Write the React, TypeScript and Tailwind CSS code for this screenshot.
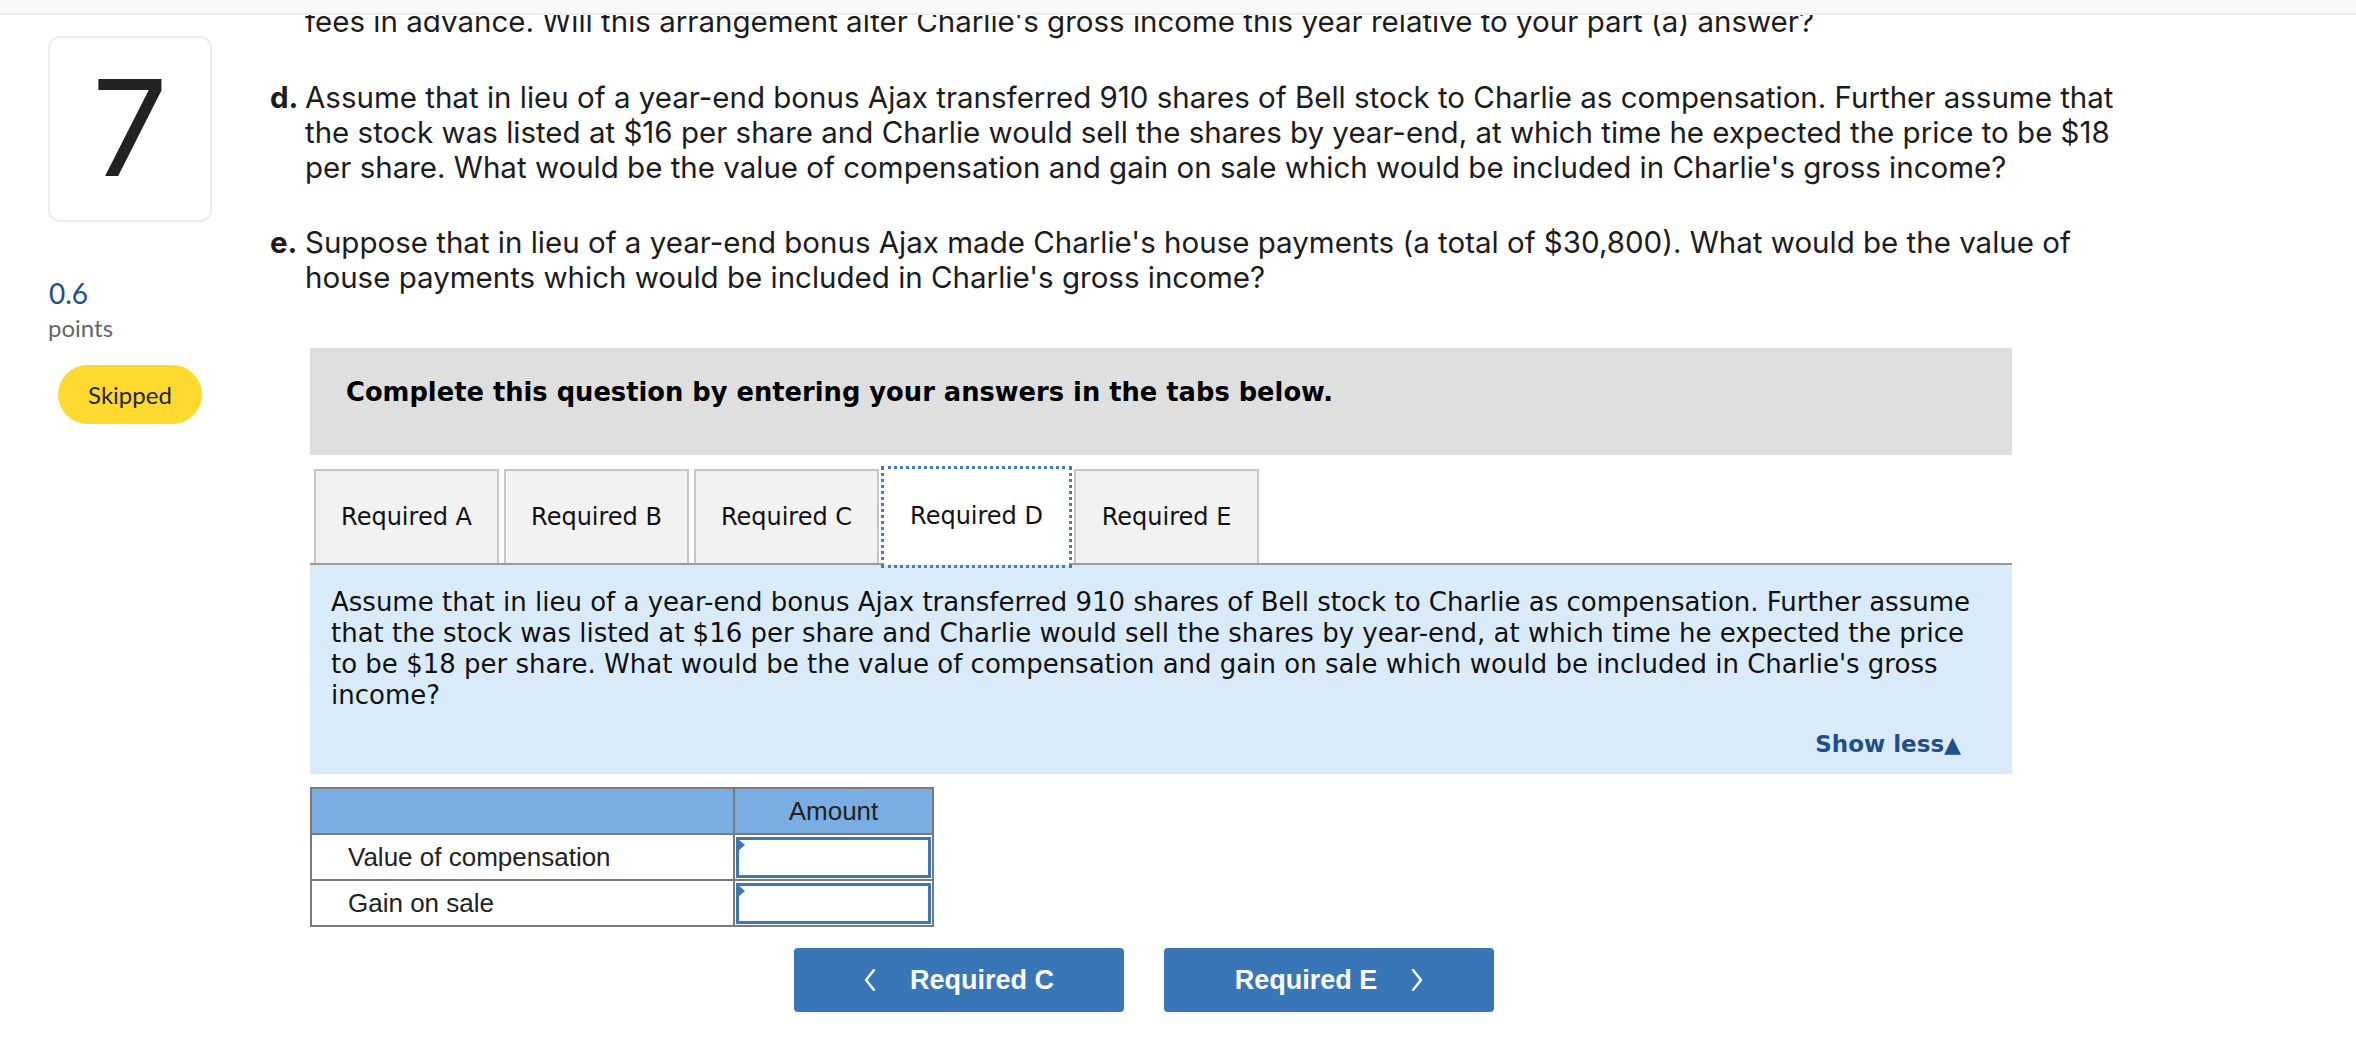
import React from "react";

const lato = "[font-family:Lato,'Noto_Sans',sans-serif]";
const inter = "[font-family:Inter,Lato,sans-serif]";
const verdana = "[font-family:'DejaVu_Sans',Verdana,sans-serif]";
const arial = "[font-family:'Liberation_Sans',Arial,sans-serif]";

const partD = [
  "Assume that in lieu of a year-end bonus Ajax transferred 910 shares of Bell stock to Charlie as compensation. Further assume that",
  "the stock was listed at $16 per share and Charlie would sell the shares by year-end, at which time he expected the price to be $18",
  "per share. What would be the value of compensation and gain on sale which would be included in Charlie's gross income?",
];

const partE = [
  "Suppose that in lieu of a year-end bonus Ajax made Charlie's house payments (a total of $30,800). What would be the value of",
  "house payments which would be included in Charlie's gross income?",
];

const prompt = [
  "Assume that in lieu of a year-end bonus Ajax transferred 910 shares of Bell stock to Charlie as compensation. Further assume",
  "that the stock was listed at $16 per share and Charlie would sell the shares by year-end, at which time he expected the price",
  "to be $18 per share. What would be the value of compensation and gain on sale which would be included in Charlie's gross",
  "income?",
];

const tabs = ["Required A", "Required B", "Required C", "Required D", "Required E"];

function Part({ label, lines }: { label: string; lines: string[] }) {
  return (
    <div className="flex">
      <span className="w-[35px] shrink-0 font-bold">{label}</span>
      <div>
        {lines.map((l, i) => (
          <div key={i} className="whitespace-nowrap">
            {l}
          </div>
        ))}
      </div>
    </div>
  );
}

function Chevron({ dir }: { dir: "left" | "right" }) {
  return (
    <svg width="12" height="22" viewBox="0 0 12 22" fill="none">
      <polyline
        points={dir === "left" ? "10,1 2,11 10,21" : "2,1 10,11 2,21"}
        stroke="white"
        strokeWidth="2.4"
        strokeLinecap="round"
        strokeLinejoin="round"
      />
    </svg>
  );
}

function AnswerInput() {
  return (
    <div className="relative h-[41px] border-[3px] border-[#3c77b6] bg-white">
      <span className="absolute -left-[1px] -top-[1px] h-0 w-0 border-y-[6px] border-l-[7px] border-y-transparent border-l-[#3c77b6]" />
    </div>
  );
}

export default function App() {
  return (
    <div className="relative h-[1044px] w-[2356px] overflow-hidden bg-white text-[#1c1c1c]">
      {/* top bar sits over the scrolled text */}
      <div className="absolute left-0 right-0 top-0 z-10 h-[15px] border-b-2 border-[#ececec] bg-[#f8f8f8]" />

      <div className="flex">
        {/* Left: question number & status */}
        <aside className={`w-[270px] shrink-0 pl-[48px] pt-[36px] ${lato}`}>
          <div className="flex h-[186px] w-[164px] items-center justify-center rounded-[12px] border-2 border-[#ededed]">
            <span className={`-mt-[4px] text-[134px] font-normal leading-none text-[#222] ${inter}`}>7</span>
          </div>
          <div className="mt-[54px] pl-[1px] text-[28px] leading-[34px] text-[#1b4f90]">0.6</div>
          <div className="mt-[3px] text-[24px] leading-[30px] text-[#666]">points</div>
          <div className="ml-[10px] mt-[22px] flex h-[59px] w-[144px] items-center justify-center rounded-full bg-[#ffda2e] text-[24px] text-[#222]">
            Skipped
          </div>
        </aside>

        {/* Right: question body */}
        <main className="flex-1 pt-[4px]">
          <div className={`text-[29.5px] leading-[35px] ${inter}`}>
            <div className="whitespace-nowrap pl-[35px]">
              fees in advance. Will this arrangement alter Charlie's gross income this year relative to your part (a) answer?
            </div>
            <div className="mt-[41px]">
              <Part label="d." lines={partD} />
            </div>
            <div className="mt-[40px]">
              <Part label="e." lines={partE} />
            </div>
          </div>

          <div className="ml-[40px] mt-[53px] w-[1702px]">
            <div className={`h-[107px] bg-[#dfdfdf] pl-[36px] pt-[29px] text-[25.75px] font-bold leading-[30px] text-black ${verdana}`}>
              Complete this question by entering your answers in the tabs below.
            </div>

            {/* Tabs */}
            <div className={`mt-[14px] flex gap-[5px] border-b-2 border-[#9a9a9a] pl-[4px] ${verdana}`}>
              {tabs.map((t) => {
                const active = t === "Required D";
                return (
                  <div
                    key={t}
                    className={
                      active
                        ? "relative -mb-[2px] flex h-[96px] w-[185px] items-center justify-center bg-white pb-[2px] text-[24px] text-[#111] outline-[3px] outline-dotted outline-[#3f7fc1]"
                        : "flex h-[94px] w-[185px] items-center justify-center border-2 border-b-0 border-[#c6c6c6] bg-[#f2f2f2] text-[24px] text-[#111]"
                    }
                  >
                    {t}
                  </div>
                );
              })}
            </div>

            {/* Prompt */}
            <div className={`bg-[#d9ebf9] pb-[14px] pl-[21px] pr-[51px] pt-[22px] text-[26px] leading-[31px] text-[#111] ${verdana}`}>
              {prompt.map((l, i) => (
                <div key={i} className="whitespace-nowrap">
                  {l}
                </div>
              ))}
              <div className="mt-[18px] text-right text-[23px] font-bold text-[#1e4f8c]">
                Show less<span className="text-[22px]">▲</span>
              </div>
            </div>

            {/* Answer table */}
            <table className={`mt-[13px] w-[624px] border-collapse border-2 border-[#7a7a7a] text-[26px] text-[#222] ${arial}`}>
              <tbody>
                <tr className="h-[46px] bg-[#7aade2]">
                  <td className="w-[423px] border-2 border-[#7a7a7a]" />
                  <td className="border-2 border-[#7a7a7a] text-center">Amount</td>
                </tr>
                <tr className="h-[46px]">
                  <td className="border-2 border-[#7a7a7a] pl-[36px]">Value of compensation</td>
                  <td className="border-2 border-[#7a7a7a] p-[1px]">
                    <AnswerInput />
                  </td>
                </tr>
                <tr className="h-[46px]">
                  <td className="border-2 border-[#7a7a7a] pl-[36px]">Gain on sale</td>
                  <td className="border-2 border-[#7a7a7a] p-[1px]">
                    <AnswerInput />
                  </td>
                </tr>
              </tbody>
            </table>

            {/* Navigation */}
            <div className={`ml-[484px] mt-[21px] flex gap-[40px] text-[27px] font-bold text-white ${arial}`}>
              <button className="flex h-[64px] w-[330px] items-center justify-center gap-[34px] rounded-[4px] bg-[#3876b8]">
                <Chevron dir="left" />
                <span>Required C</span>
              </button>
              <button className="flex h-[64px] w-[330px] items-center justify-center gap-[34px] rounded-[4px] bg-[#3876b8]">
                <span>Required E</span>
                <Chevron dir="right" />
              </button>
            </div>
          </div>
        </main>
      </div>
    </div>
  );
}
